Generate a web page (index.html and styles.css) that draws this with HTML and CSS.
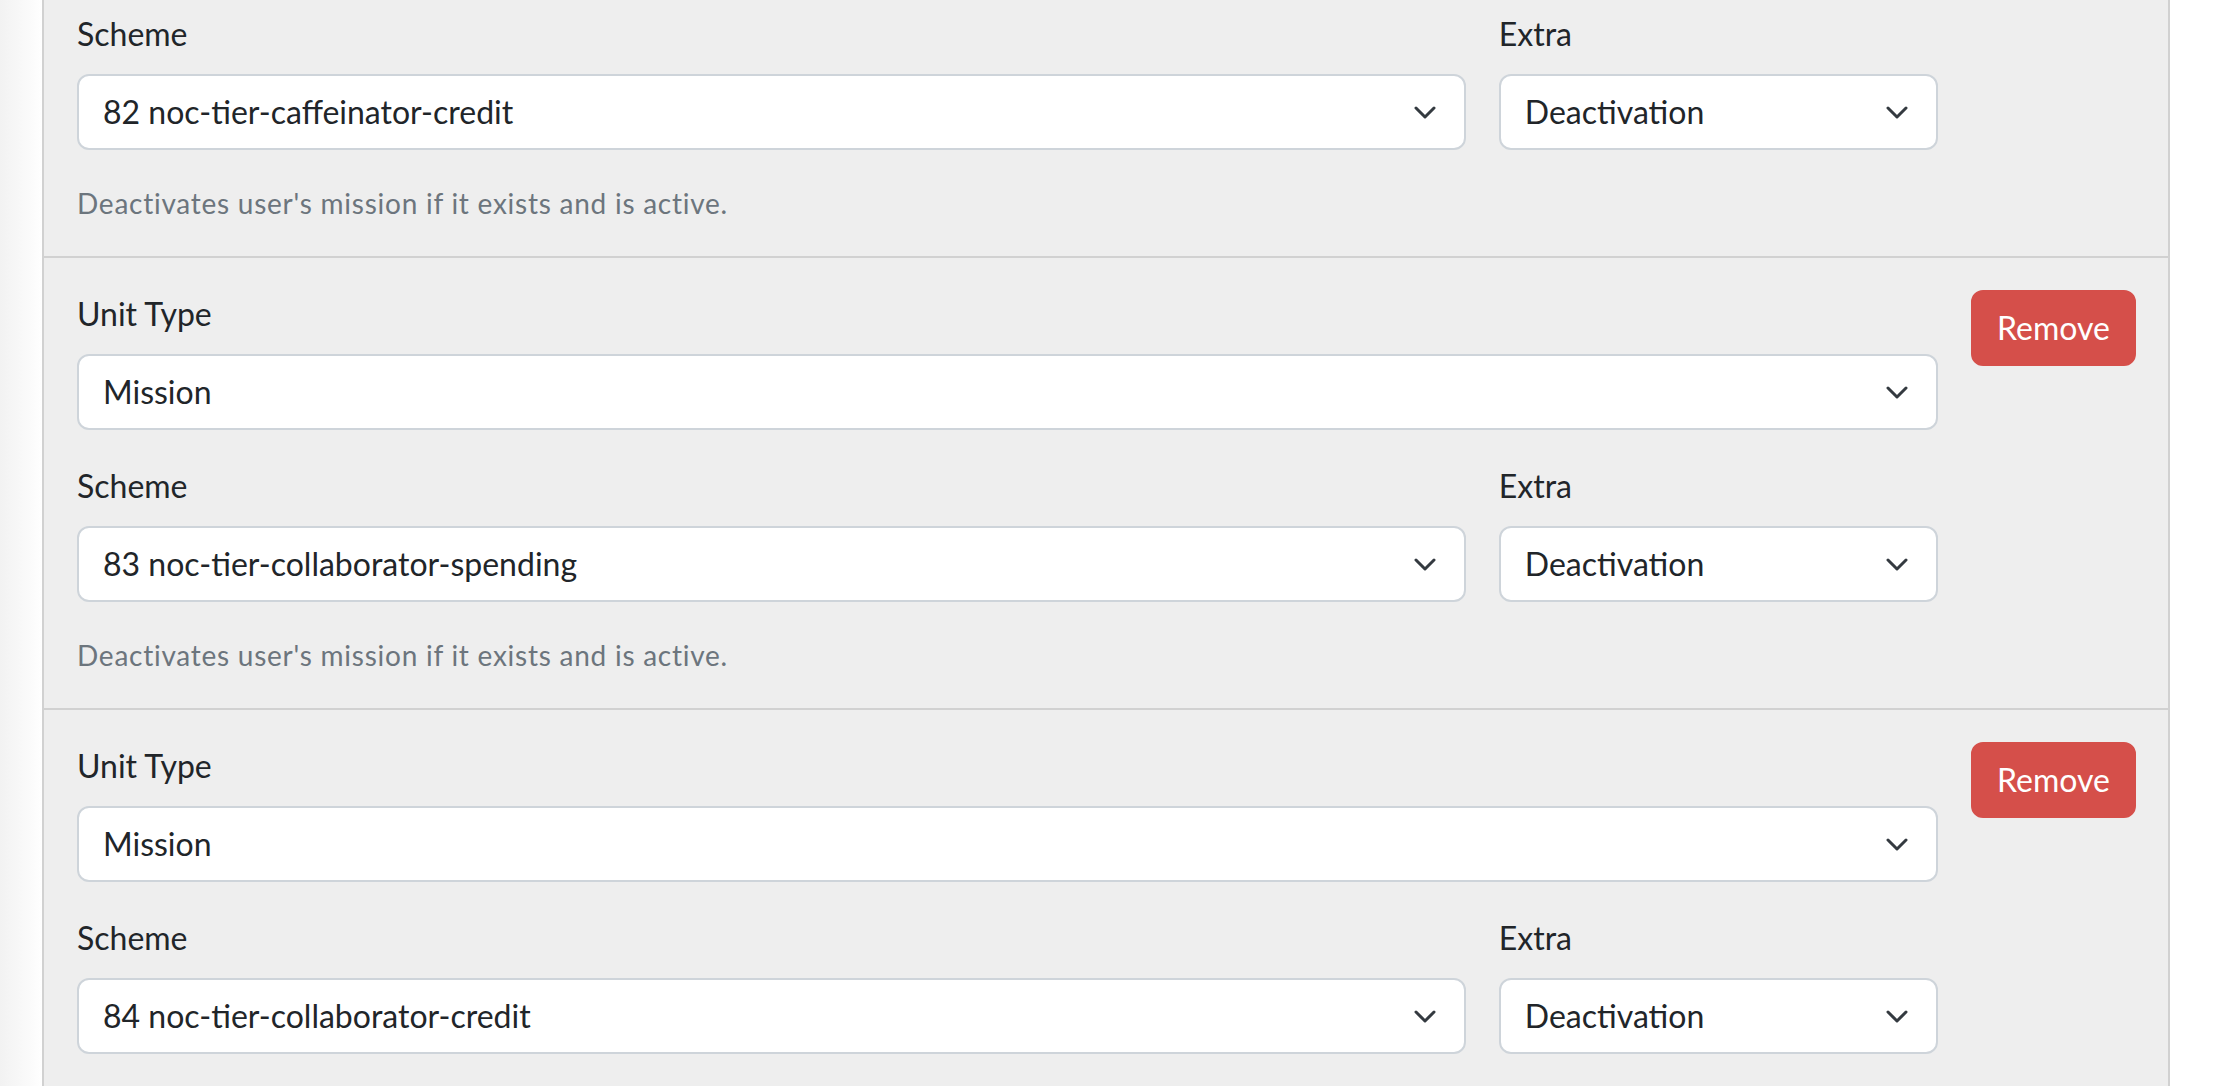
FILE: index.html
```html
<!DOCTYPE html>
<html lang="en">
<head>
<meta charset="utf-8">
<title>Units</title>
<link rel="stylesheet" href="styles.css">
</head>
<body>
<div class="panel">
  <div class="item">
    <div class="fields">
      <div class="group">
        <label class="label">Unit Type</label>
        <select class="select"><option>Mission</option></select>
      </div>
      <div class="group pair">
        <div class="col">
          <label class="label">Scheme</label>
          <select class="select"><option>82 noc-tier-caffeinator-credit</option></select>
        </div>
        <div class="col">
          <label class="label">Extra</label>
          <select class="select"><option>Deactivation</option></select>
        </div>
      </div>
      <p class="help">Deactivates user's mission if it exists and is active.</p>
    </div>
    <button class="btn-remove" type="button">Remove</button>
  </div>
  <div class="item">
    <div class="fields">
      <div class="group">
        <label class="label">Unit Type</label>
        <select class="select"><option>Mission</option></select>
      </div>
      <div class="group pair">
        <div class="col">
          <label class="label">Scheme</label>
          <select class="select"><option>83 noc-tier-collaborator-spending</option></select>
        </div>
        <div class="col">
          <label class="label">Extra</label>
          <select class="select"><option>Deactivation</option></select>
        </div>
      </div>
      <p class="help">Deactivates user's mission if it exists and is active.</p>
    </div>
    <button class="btn-remove" type="button">Remove</button>
  </div>
  <div class="item">
    <div class="fields">
      <div class="group">
        <label class="label">Unit Type</label>
        <select class="select"><option>Mission</option></select>
      </div>
      <div class="group pair">
        <div class="col">
          <label class="label">Scheme</label>
          <select class="select"><option>84 noc-tier-collaborator-credit</option></select>
        </div>
        <div class="col">
          <label class="label">Extra</label>
          <select class="select"><option>Deactivation</option></select>
        </div>
      </div>
      <p class="help">Deactivates user's mission if it exists and is active.</p>
    </div>
    <button class="btn-remove" type="button">Remove</button>
  </div>
</div>
</body>
</html>
```
FILE: styles.css
```css
html, body {
  margin: 0;
  padding: 0;
}
body {
  font-family: Lato, "Open Sans", sans-serif;
  font-size: 32px;
  line-height: 48px;
  color: #212529;
  background: #ffffff linear-gradient(to right, #f2f2f2 0, #fafafa 28px, #ffffff 42px) no-repeat;
  background-size: 42px 100%;
  min-height: 1086px;
  overflow: hidden;
}
.panel {
  margin: -194px 58px 0 42px;
  border-left: 2px solid #d1d1d1;
  border-right: 2px solid #d1d1d1;
  background: #eeeeee;
}
.item {
  display: flex;
  align-items: flex-start;
  gap: 33px;
  padding: 32px 32px 32px 33px;
  border-bottom: 2px solid #d1d1d1;
}
.fields {
  flex: 1;
  min-width: 0;
}
.group {
  margin-bottom: 32px;
}
.pair {
  display: grid;
  grid-template-columns: minmax(0, 1388fr) minmax(0, 439fr);
  column-gap: 33px;
}
.label {
  display: block;
  margin-bottom: 16px;
  font-size: 32px;
  line-height: 48px;
}
.select {
  display: block;
  box-sizing: border-box;
  width: 100%;
  height: 76px;
  margin: 0;
  padding: 12px 72px 12px 24px;
  font-family: inherit;
  font-size: 32px;
  line-height: 48px;
  color: #212529;
  border: 2px solid #ced4da;
  border-radius: 12px;
  -webkit-appearance: none;
  appearance: none;
  background-color: #ffffff;
  background-image: url("data:image/svg+xml,%3Csvg xmlns='http://www.w3.org/2000/svg' viewBox='0 0 22 13'%3E%3Cpath fill='none' stroke='%23343a40' stroke-linecap='round' stroke-linejoin='round' stroke-width='3' d='M2 2l9 9 9-9'/%3E%3C/svg%3E");
  background-repeat: no-repeat;
  background-position: right 28px center;
  background-size: 22px 13px;
}
.help {
  margin: 0;
  font-size: 28px;
  line-height: 42px;
  letter-spacing: 0.75px;
  color: #6c757d;
}
.btn-remove {
  box-sizing: border-box;
  height: 76px;
  padding: 12px 24px;
  font-family: inherit;
  font-size: 32px;
  line-height: 48px;
  color: #ffffff;
  background: #d54f4a;
  border: 2px solid #d54f4a;
  border-radius: 12px;
  cursor: pointer;
}
```
